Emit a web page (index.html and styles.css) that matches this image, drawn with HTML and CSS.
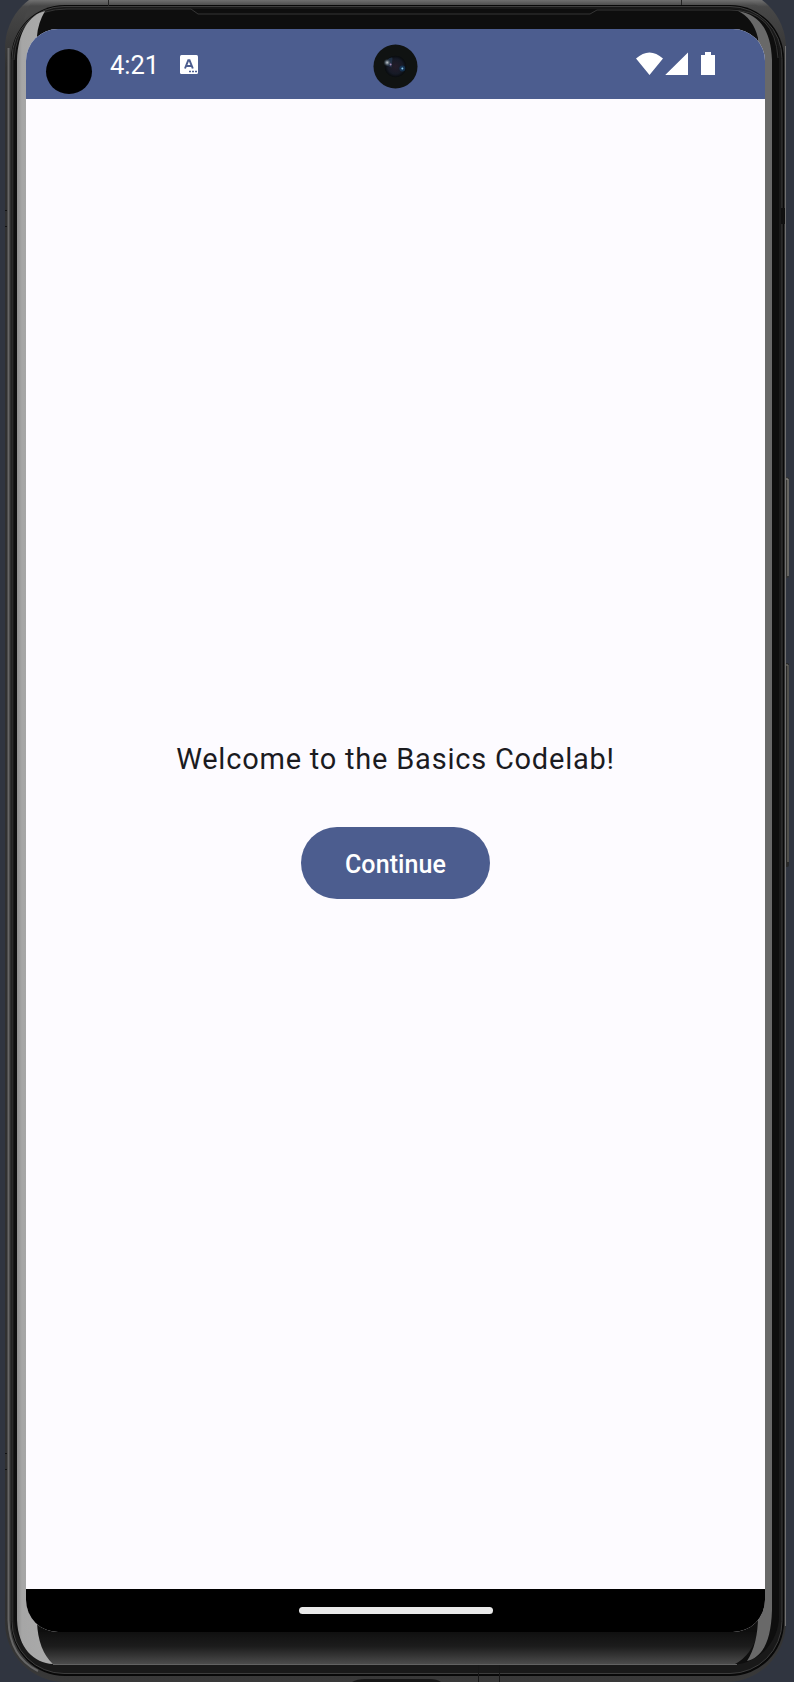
FILE: index.html
```html
<!DOCTYPE html>
<html lang="en">
<head>
<meta charset="utf-8">
<title>Basics Codelab</title>
<link rel="stylesheet" href="styles.css">
</head>
<body>
<div class="emulator">
  <svg class="frame" viewBox="0 0 794 1682" aria-hidden="true">
    <defs>
      <linearGradient id="top" x1="0" y1="0" x2="0" y2="6" gradientUnits="userSpaceOnUse"><stop stop-color="#707070"/><stop offset="1" stop-color="#474747"/></linearGradient>
      <linearGradient id="chin" x1="0" y1="1632" x2="0" y2="1664" gradientUnits="userSpaceOnUse"><stop stop-color="#101010"/><stop offset=".45" stop-color="#1c1c1c"/><stop offset="1" stop-color="#4b4b4b"/></linearGradient>
      <linearGradient id="left" x1="17" y1="0" x2="50" y2="0" gradientUnits="userSpaceOnUse"><stop stop-color="#8f8f8f"/><stop offset=".15" stop-color="#a6a6a6"/><stop offset="1" stop-color="#aaa"/></linearGradient>
      <linearGradient id="shell" x1="0" y1="0" x2="0" y2="1682" gradientUnits="userSpaceOnUse"><stop stop-color="#707070"/><stop offset=".004" stop-color="#484848"/><stop offset=".04" stop-color="#303030"/><stop offset=".96" stop-color="#303030"/><stop offset="1" stop-color="#393939"/></linearGradient>
    </defs>
    <rect x="784" y="477" width="5" height="101" rx="2" fill="#343432"/>
    <path d="M786 479H788V576" fill="none" stroke="#97958f"/>
    <rect x="784" y="663" width="5" height="204" rx="2" fill="#282827"/>
    <path d="M786 665H788V862" fill="none" stroke="#7b7971"/>
    <rect x="5" y="-12" width="781" height="1694" rx="60" fill="url(#shell)"/>
    <path d="M34 0H750L758 6H60Q40 6 24 20Q27 6 34 0Z" fill="url(#top)"/>
    <path d="M8.5 48V1620C9 1645 20 1662 38 1671" fill="none" stroke="#666" stroke-width="2"/>
    <rect x="11" y="5" width="773" height="1671" rx="54" fill="#080808"/>
    <rect x="12" y="6.5" width="770" height="1667" rx="52" fill="#191919" stroke="#3d3d3d"/>
    <path d="M785.5 46V1626" stroke="#707070"/>
    <rect x="14" y="9" width="765" height="1656" rx="49" fill="#0e0e0e"/>
    <path d="M14 60Q17 9 67 9H191L198 14H590L597 10H730Q775 10 778 58" fill="none" stroke="#353535"/>
    <path d="M37 1632H758Q752 1655 735 1664H53Q39 1650 37 1632Z" fill="url(#chin)"/>
    <path d="M45 11C29 15 18 32 17 60V1620C18 1648 34 1663 53 1664Q38 1650 37 1622V36Q38 23 45 11Z" fill="url(#left)"/>
    <path d="M738 11C761 15 771 32 772 60V1610C771 1641 763 1657 747 1661Q758 1644 758 1616V38Q753 18 738 11Z" fill="#696969"/>
    <path d="M53 1664.5H737" stroke="#626262"/>
    <path d="M352 1682Q357 1679 365 1679H430Q437 1679 441 1682Z" fill="#171717"/>
    <path d="M478.5 1665V1682M499.5 1665V1682" stroke="#171717"/>
    <path d="M108.5 0V6M681.5 0V5" stroke="#242424"/>
    <path d="M5 210.5H7M5 226.5H7M5 1453.5H7M5 1469.5H7" stroke="#111"/>
    <rect x="781" y="208" width="4" height="16" fill="#101010"/>
  </svg>
  <div class="screen">
    <header class="status">
      <span class="cutout"></span>
      <span class="time">4:21</span>
      <svg class="notice" viewBox="0 0 18 19" aria-hidden="true"><rect width="18" height="19" rx="1.5" fill="#fff"/><path d="M5 13.5L8.3 5.2H9.5L12.8 13.5M6.4 11H11.4" fill="none" stroke="#4c5d8f" stroke-width="2"/><path d="M9 16.5H11M12 16.5H14M15 16.5H17" stroke="#4c5d8f" stroke-width="1.4"/></svg>
      <svg class="camera" viewBox="0 0 46 46" aria-hidden="true">
        <defs><radialGradient id="lens"><stop stop-color="#241c29"/><stop offset=".7" stop-color="#161a26"/><stop offset="1" stop-color="#080b0d"/></radialGradient><radialGradient id="glint"><stop stop-color="#c2cad0"/><stop offset=".4" stop-color="#65717b"/><stop offset="1" stop-color="#26333f" stop-opacity="0"/></radialGradient></defs>
        <circle cx="23" cy="23" r="22.5" fill="#101312"/><circle cx="23" cy="23" r="11" fill="url(#lens)"/>
        <path d="M14 17Q17 13 20 14L19 24L14 22Z" fill="#28405b" opacity=".6"/><circle cx="14.5" cy="19" r="4" fill="url(#glint)"/><circle cx="18" cy="21" r="1" fill="#a58ab5"/><circle cx="30" cy="25" r="3" fill="#163f65" opacity=".7"/><circle cx="30" cy="25" r="1" fill="#8bcaf0"/>
      </svg>
      <svg class="signals" viewBox="0 0 80 23" aria-hidden="true"><path d="M0 6.5Q13.5-5.5 27 6.5L13.5 23ZM52 .5V23H29.2ZM65 3H69V0H75V3H79V23H65Z" fill="#fff"/></svg>
    </header>
    <main class="welcome">
      <p class="greeting">Welcome to the Basics Codelab!</p>
      <button class="continue">Continue</button>
    </main>
    <footer class="navigation"><span class="handle"></span></footer>
  </div>
</div>
</body>
</html>
```
FILE: styles.css
```css
body { margin: 0; background: #303540; font-family: Roboto, sans-serif; }
.emulator { position: relative; box-sizing: border-box; width: 794px; height: 1682px; padding: 29px 29px 50px 26px; overflow: hidden; }
.frame { position: absolute; inset: 0; width: 794px; height: 1682px; }
.screen { position: relative; display: flex; flex-direction: column; height: 1603px; border-radius: 32px; overflow: hidden; background: #fdfbff; }
.status { display: flex; flex: 0 0 70px; box-sizing: border-box; padding-left: 20px; background: #4c5d8f; color: #fff; }
.cutout { width: 46px; height: 45px; margin-top: 20px; border-radius: 50%; background: #000; }
.time { width: 48px; margin: 21px 0 0 18px; font-size: 25.5px; line-height: 30px; white-space: nowrap; }
.notice { width: 18px; height: 19px; margin: 26px 0 0 22px; }
.camera { width: 45px; height: 45px; margin: 15px 0 0 175px; }
.signals { width: 80px; height: 23px; margin: 23px 0 0 218px; }
.welcome { flex: 1; display: flex; flex-direction: column; align-items: center; justify-content: center; gap: 46px; padding-bottom: 52px; }
.greeting { margin: 0; font-size: 29px; line-height: 44px; letter-spacing: .78px; color: #1b1b1f; white-space: nowrap; }
.continue { width: 189px; height: 72px; padding: 4px 0 0; border: 0; border-radius: 36px; background: #4c5d8f; color: #fff; font: 500 25px/30px Roboto, sans-serif; letter-spacing: .1px; }
.navigation { display: flex; flex: 0 0 43px; justify-content: center; background: #000; }
.handle { width: 194px; height: 7px; margin-top: 18px; border-radius: 4px; background: #e9e9e9; }
```
